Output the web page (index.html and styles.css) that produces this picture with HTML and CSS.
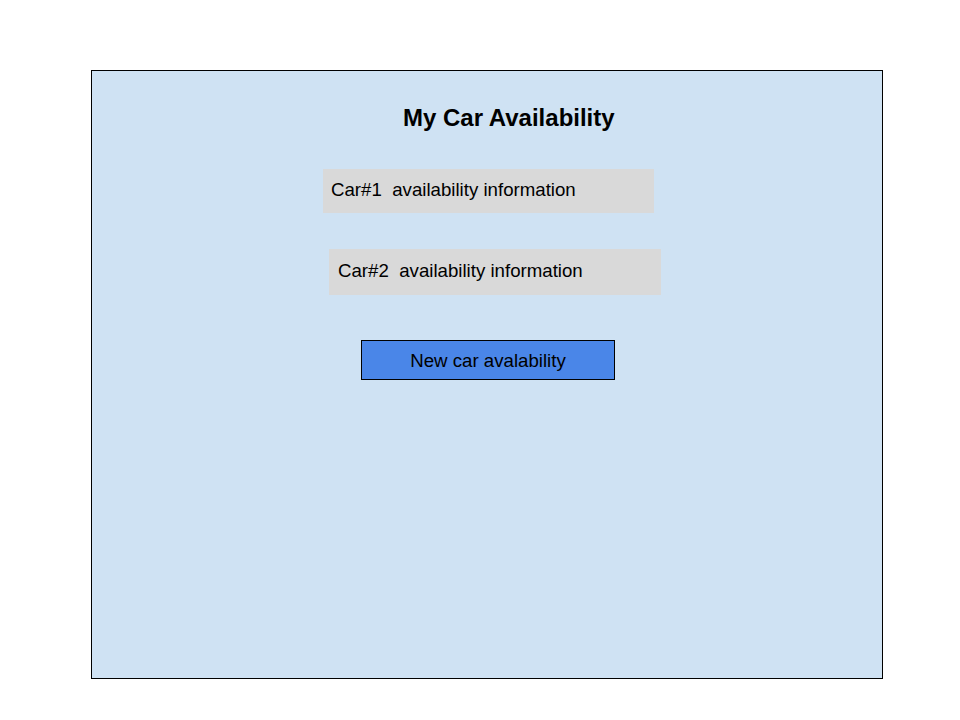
FILE: index.html
```html
<!DOCTYPE html>
<html>
<head>
<meta charset="utf-8">
<link rel="stylesheet" href="styles.css">
</head>
<body>
<div class="page">
  <div class="frame">
    <h1 class="title">My Car Availability</h1>
    <div class="card card-one">Car#1&nbsp; availability information</div>
    <div class="card card-two">Car#2&nbsp; availability information</div>
    <button class="new-btn">New car avalability</button>
  </div>
</div>
</body>
</html>
```

FILE: styles.css
```css
html, body {
  margin: 0;
  padding: 0;
  background: #ffffff;
}
.page {
  padding: 70px 0 0 91px;
  font-family: "Liberation Sans", Arial, sans-serif;
}
.frame {
  box-sizing: border-box;
  width: 792px;
  height: 609px;
  border: 1px solid #000;
  background: #cfe2f3;
  display: flex;
  flex-direction: column;
  align-items: flex-start;
}
.title {
  margin: 33px 0 0 311px;
  font-size: 24px;
  line-height: 28px;
  font-weight: bold;
  color: #000;
}
.card {
  box-sizing: border-box;
  background: #d9d9d9;
  font-size: 18.67px;
  line-height: 21px;
  color: #000;
  padding-left: 8px;
}
.card-one {
  margin: 37px 0 0 231px;
  width: 331px;
  height: 44px;
  padding-top: 10px;
}
.card-two {
  margin: 36px 0 0 237px;
  width: 332px;
  height: 46px;
  padding-top: 11px;
  padding-left: 9px;
}
.new-btn {
  box-sizing: border-box;
  margin: 45px 0 0 269px;
  width: 254px;
  height: 40px;
  border: 1px solid #000;
  background: #4a86e8;
  font-family: "Liberation Sans", Arial, sans-serif;
  font-size: 18.67px;
  line-height: 21px;
  color: #000;
  padding: 0;
  display: flex;
  align-items: center;
  justify-content: center;
}
```
